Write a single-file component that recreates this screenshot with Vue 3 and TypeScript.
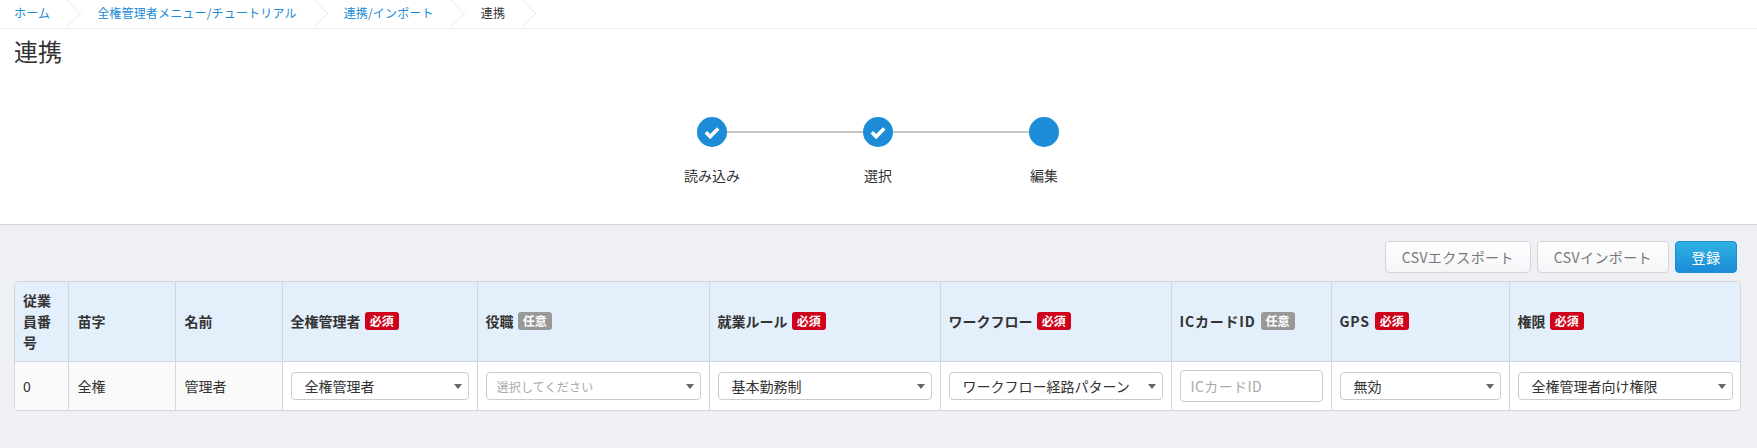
<template>
  <div class="page">
    <header class="top">
      <nav class="breadcrumb">
        <a v-for="item in crumbs" :key="item" class="crumb">{{ item }}</a>
        <span class="crumb current">連携</span>
      </nav>
      <h1 class="title">連携</h1>
      <div class="stepper">
        <div v-for="(step, idx) in steps" :key="step.label" class="step">
          <span v-if="idx > 0" class="connector"></span>
          <span class="dot">
            <svg v-if="step.done" width="30" height="30" viewBox="0 0 30 30">
              <path d="M8.8 15.2l4.4 4.4 8-8" fill="none" stroke="#fff" stroke-width="3.6" />
            </svg>
          </span>
          <span class="step-label">{{ step.label }}</span>
        </div>
      </div>
    </header>

    <main class="content">
      <div class="actions">
        <button class="btn">CSVエクスポート</button>
        <button class="btn">CSVインポート</button>
        <button class="btn primary">登録</button>
      </div>

      <div class="table-wrap">
        <table>
          <colgroup>
            <col v-for="col in columns" :key="col.name" :style="{ width: col.width + 'px' }" />
          </colgroup>
          <thead>
            <tr>
              <th v-for="col in columns" :key="col.name" :class="{ latin: col.latin }">
                {{ col.name }}
                <span v-if="col.badge" class="badge" :class="{ optional: col.badge === '任意' }">{{ col.badge }}</span>
              </th>
            </tr>
          </thead>
          <tbody>
            <tr>
              <td class="fixed">0</td>
              <td class="fixed">全権</td>
              <td class="fixed">管理者</td>
              <td v-for="sel in selects.slice(0, 4)" :key="sel.value">
                <div class="select" :class="{ placeholder: sel.empty }">
                  <select>
                    <option>{{ sel.value }}</option>
                  </select>
                </div>
              </td>
              <td><input class="text-input" type="text" placeholder="ICカードID" /></td>
              <td v-for="sel in selects.slice(4)" :key="sel.value">
                <div class="select">
                  <select>
                    <option>{{ sel.value }}</option>
                  </select>
                </div>
              </td>
            </tr>
          </tbody>
        </table>
      </div>
    </main>
  </div>
</template>

<script setup lang="ts">
interface Column {
  name: string
  width: number
  badge?: string
  latin?: boolean
}

const crumbs = ['ホーム', '全権管理者メニュー/チュートリアル', '連携/インポート']

const steps = [
  { label: '読み込み', done: true },
  { label: '選択', done: true },
  { label: '編集', done: false }
]

const columns: Column[] = [
  { name: '従業員番号', width: 53 },
  { name: '苗字', width: 107 },
  { name: '名前', width: 107 },
  { name: '全権管理者', width: 195, badge: '必須' },
  { name: '役職', width: 232, badge: '任意' },
  { name: '就業ルール', width: 231, badge: '必須' },
  { name: 'ワークフロー', width: 231, badge: '必須' },
  { name: 'ICカードID', width: 160, badge: '任意', latin: true },
  { name: 'GPS', width: 178, badge: '必須', latin: true },
  { name: '権限', width: 232, badge: '必須' }
]

const selects = [
  { value: '全権管理者' },
  { value: '選択してください', empty: true },
  { value: '基本勤務制' },
  { value: 'ワークフロー経路パターン' },
  { value: '無効' },
  { value: '全権管理者向け権限' }
]
</script>

<style>
html,
body {
  margin: 0;
  background: #eff0f4;
}
</style>

<style scoped>
.page {
  min-height: 448px;
  font-family: "Noto Sans CJK JP", "Noto Sans", sans-serif;
  font-size: 14px;
  color: #333;
  background: #eff0f4;
}

.top {
  height: 225px;
  box-sizing: border-box;
  background: #fff;
  border-bottom: 1px solid #d3d6db;
}

.breadcrumb {
  display: flex;
  height: 29px;
  box-sizing: border-box;
  padding-left: 14px;
  border-bottom: 1px solid #eceef1;
  overflow: hidden;
}

.crumb {
  position: relative;
  padding-right: 31px;
  margin-right: 16px;
  font-size: 12px;
  line-height: 26px;
  letter-spacing: 0.17px;
  color: #1c8cd8;
  white-space: nowrap;
}

.crumb::after {
  content: "";
  position: absolute;
  right: 4px;
  top: 3px;
  width: 20px;
  height: 20px;
  border-top: 1px solid #eceef1;
  border-right: 1px solid #eceef1;
  transform: rotate(45deg);
}

.crumb.current {
  color: #333;
}

.title {
  margin: 0;
  padding: 6px 14px 0;
  font-size: 24px;
  font-weight: 400;
  line-height: 32px;
  color: #333;
}

.stepper {
  display: flex;
  justify-content: center;
  padding-right: 1px;
  margin-top: 50px;
}

.step {
  position: relative;
  display: flex;
  flex-direction: column;
  align-items: center;
  width: 166px;
}

.connector {
  position: absolute;
  top: 14px;
  right: 50%;
  width: 166px;
  height: 2px;
  background: #c3c5c9;
}

.dot {
  position: relative;
  z-index: 1;
  width: 30px;
  height: 30px;
  border-radius: 50%;
  background: #1c8cd8;
}

.dot svg {
  display: block;
}

.step-label {
  margin-top: 18px;
  font-size: 14px;
  line-height: 20px;
  color: #333;
}

.content {
  padding: 16px 16px 0 14px;
}

.actions {
  display: flex;
  justify-content: flex-end;
  gap: 6px;
  padding-right: 4px;
  margin-bottom: 8px;
}

.btn {
  height: 32px;
  padding: 0 16px;
  box-sizing: border-box;
  font-family: inherit;
  font-size: 14px;
  letter-spacing: 0.4px;
  color: #777;
  background: linear-gradient(#fff, #f4f5f7);
  border: 1px solid #d3d6db;
  border-radius: 4px;
}

.btn.primary {
  width: 62px;
  padding: 0;
  color: #fff;
  background: linear-gradient(#2fb2e2, #1c8cd8);
  border-color: #1c8cd8;
}

.table-wrap {
  background: #fff;
  border: 1px solid #d3d6db;
  border-radius: 4px;
  overflow: hidden;
}

table {
  width: 100%;
  table-layout: fixed;
  border-collapse: collapse;
}

th,
td {
  padding: 0 8px;
  border-left: 1px solid #d3d6db;
  text-align: left;
}

th:first-child,
td:first-child {
  border-left: 0;
}

th:nth-child(2),
td:nth-child(2),
th:nth-child(3),
td:nth-child(3) {
  padding-left: 9px;
}

th {
  height: 79px;
  font-weight: 600;
  line-height: 21px;
  color: #333;
  background: #e4effc;
  border-bottom: 1px solid #d3d6db;
}

th.latin {
  letter-spacing: 0.8px;
}

td {
  height: 48px;
  font-weight: 400;
}

td.fixed {
  background: #fafafa;
}

.badge {
  display: inline-block;
  width: 34px;
  height: 18px;
  margin-left: 1px;
  font-size: 12px;
  font-weight: 700;
  line-height: 18px;
  letter-spacing: 0;
  text-align: center;
  vertical-align: 1px;
  color: #fff;
  background: #d0021b;
  border-radius: 3px;
}

.badge.optional {
  background: #999;
}

.select {
  position: relative;
}

.select::after {
  content: "";
  position: absolute;
  right: 7px;
  top: 12px;
  border-left: 4px solid transparent;
  border-right: 4px solid transparent;
  border-top: 5px solid #666;
  pointer-events: none;
}

.select select {
  display: block;
  width: 100%;
  height: 28px;
  padding: 0 22px 0 13px;
  box-sizing: border-box;
  font-family: inherit;
  font-size: 14px;
  color: #333;
  background: #fff;
  border: 1px solid #c8cbd0;
  border-radius: 4px;
  appearance: none;
}

.select.placeholder select {
  padding-left: 10px;
  font-size: 12px;
  letter-spacing: 0.2px;
  color: #aaa;
}

.text-input {
  display: block;
  width: 100%;
  height: 32px;
  padding: 0 10px;
  box-sizing: border-box;
  font-family: inherit;
  font-size: 14px;
  letter-spacing: 0.4px;
  color: #333;
  background: #fff;
  border: 1px solid #c8cbd0;
  border-radius: 4px;
  outline: none;
}

.text-input::placeholder {
  color: #aaa;
}
</style>
